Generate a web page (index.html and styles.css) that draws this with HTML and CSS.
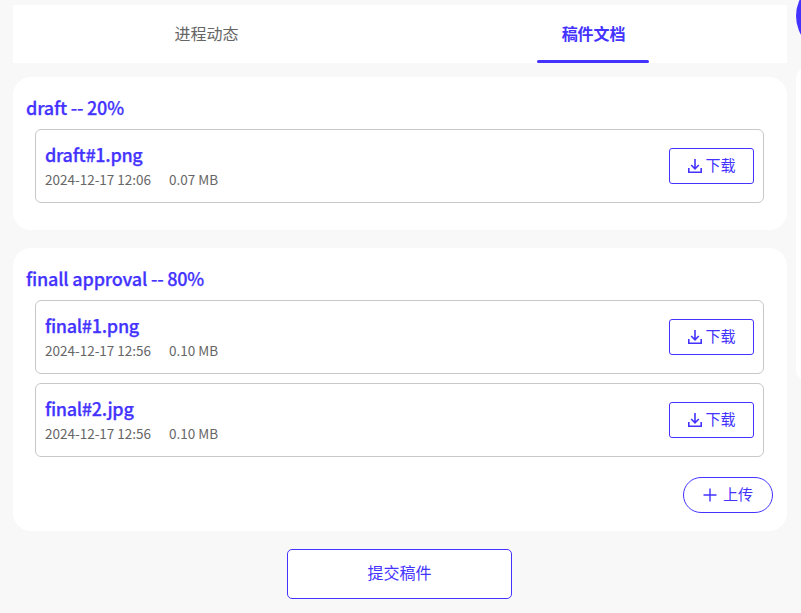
FILE: index.html
```html
<!DOCTYPE html>
<html lang="zh">
<head>
<meta charset="utf-8">
<title>稿件文档</title>
<link rel="stylesheet" href="styles.css">
</head>
<body>
<div class="page">
  <main class="main">
    <nav class="tabs">
      <div class="tab">进程动态</div>
      <div class="tab active">稿件文档</div>
    </nav>
    <section class="card first">
      <h2 class="stage">draft -- 20%</h2>
      <div class="file">
        <div class="info">
          <div class="name">draft#1.png</div>
          <div class="meta"><span>2024-12-17 12:06</span><span>0.07 MB</span></div>
        </div>
        <button class="dl"><svg class="dl-ico" viewBox="0 0 14 14"><path d="M7 0v9.5M3.2 6 7 9.8 10.8 6M.8 9v4.2h12.4V9" fill="none" stroke="currentColor" stroke-width="1.6"/></svg><span class="label">下载</span></button>
      </div>
    </section>
    <section class="card second">
      <h2 class="stage">finall approval -- 80%</h2>
      <div class="file">
        <div class="info">
          <div class="name">final#1.png</div>
          <div class="meta"><span>2024-12-17 12:56</span><span>0.10 MB</span></div>
        </div>
        <button class="dl"><svg class="dl-ico" viewBox="0 0 14 14"><path d="M7 0v9.5M3.2 6 7 9.8 10.8 6M.8 9v4.2h12.4V9" fill="none" stroke="currentColor" stroke-width="1.6"/></svg><span class="label">下载</span></button>
      </div>
      <div class="file">
        <div class="info">
          <div class="name">final#2.jpg</div>
          <div class="meta"><span>2024-12-17 12:56</span><span>0.10 MB</span></div>
        </div>
        <button class="dl"><svg class="dl-ico" viewBox="0 0 14 14"><path d="M7 0v9.5M3.2 6 7 9.8 10.8 6M.8 9v4.2h12.4V9" fill="none" stroke="currentColor" stroke-width="1.6"/></svg><span class="label">下载</span></button>
      </div>
      <div class="upload-row">
        <button class="upload"><svg class="plus" viewBox="0 0 14 14"><path d="M7 .5v13M.5 7h13" fill="none" stroke="currentColor" stroke-width="1.4"/></svg><span class="label">上传</span></button>
      </div>
    </section>
    <div class="submit-row"><button class="submit"><span class="label">提交稿件</span></button></div>
  </main>
  <aside class="side"></aside>
  <div class="fab"></div>
</div>
</body>
</html>
```
FILE: styles.css
```css
* { box-sizing: border-box; }
html, body { margin: 0; padding: 0; }
body {
  background: #f8f8f8;
  font-family: "Noto Sans CJK SC", "Noto Sans", sans-serif;
  color: #666;
  overflow: hidden;
}
.page { position: relative; width: 801px; height: 613px; overflow: hidden; }
.main { width: 774px; margin-left: 13px; padding-top: 5px; }
.tabs { display: flex; height: 58px; background: #fff; }
.tab {
  flex: 1;
  display: flex;
  align-items: center;
  justify-content: center;
  position: relative;
  font-size: 16px;
  line-height: 24px;
  color: #666;
  padding-bottom: 2px;
}
.tab.active { color: #4433ff; font-weight: 700; letter-spacing: -0.1px; }
.tab.active::after {
  content: "";
  position: absolute;
  left: 50%;
  bottom: 0;
  width: 112px;
  height: 3px;
  margin-left: -57px;
  border-radius: 2px;
  background: #4433ff;
}
.card { background: #fff; border-radius: 18px; padding: 0 23px 0 22px; }
.card.first { margin-top: 14px; height: 153px; padding-top: 17px; }
.card.second { margin-top: 18px; height: 283px; padding-top: 17px; }
.stage {
  margin: 0 0 9px -9px;
  font-size: 18px;
  line-height: 26px;
  font-weight: 500;
  color: #4433ff;
  letter-spacing: -0.2px;
  -webkit-text-stroke: 0.25px #4433ff;
}
.file {
  display: flex;
  align-items: center;
  justify-content: space-between;
  height: 74px;
  margin-bottom: 9px;
  padding: 0 9px;
  border: 1px solid #c8c8c8;
  border-radius: 6px;
  background: #fff;
}
.info { padding-bottom: 3px; }
.name {
  font-size: 18px;
  line-height: 26px;
  font-weight: 500;
  color: #4433ff;
  letter-spacing: -0.3px;
  -webkit-text-stroke: 0.25px #4433ff;
}
.meta { display: flex; gap: 18px; font-size: 13.5px; line-height: 20px; color: #666; margin-top: 2px; }
button { font-family: inherit; background: #fff; color: #4433ff; border: 1px solid #4433ff; cursor: pointer; padding: 0; }
.label { display: block; line-height: 20px; padding-bottom: 3px; }
.dl {
  display: flex;
  align-items: center;
  justify-content: center;
  width: 85px;
  height: 36px;
  padding-left: 1px;
  border-radius: 3px;
  font-size: 15px;
}
.dl-ico { width: 14px; height: 14px; margin-right: 3px; }
.upload-row { display: flex; justify-content: flex-end; margin: 20px -9px 0 0; }
.upload {
  display: flex;
  align-items: center;
  justify-content: center;
  width: 90px;
  height: 36px;
  border-radius: 18px;
  font-size: 15px;
}
.plus { width: 14px; height: 14px; margin-right: 6px; }
.submit-row { display: flex; justify-content: center; margin-top: 18px; padding-right: 2px; }
.submit { width: 225px; height: 50px; border-radius: 5px; font-size: 16px; }
.submit .label { padding-left: 1px; padding-bottom: 5px; }
.side {
  position: absolute;
  left: 796px;
  top: 68px;
  width: 60px;
  height: 312px;
  background: #fff;
  border-radius: 10px;
}
.fab {
  position: absolute;
  left: 796px;
  top: -22px;
  width: 76px;
  height: 76px;
  border-radius: 50%;
  background: #4433ff;
}
```
